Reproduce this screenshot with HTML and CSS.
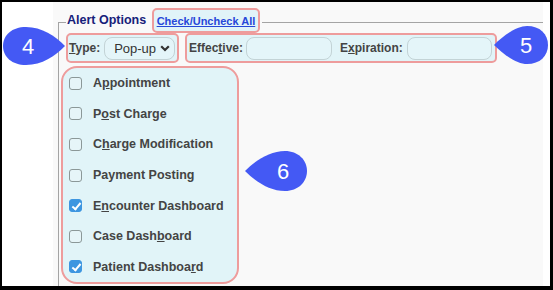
FILE: index.html
```html
<!DOCTYPE html>
<html lang="en">
<head>
  <meta charset="UTF-8">
  <title>Alert Options</title>
  <link rel="stylesheet" href="styles.css">
</head>
<body>

  <div class="frame">
    <div class="panel">
      <fieldset class="alert-options">
        <legend>
          <span class="legend-title">Alert Options</span>
          <span class="hl hl-link"><a href="#">Check/Uncheck All</a></span>
        </legend>

        <div class="row">
          <div class="hl hl-type">
            <label class="lbl"><u>T</u>ype:</label>
            <span class="select-wrap">
              <select class="sel">
                <option>Pop-up</option>
                <option>Banner</option>
              </select>
              <svg class="chev" width="10" height="7" viewBox="0 0 10 7"><path d="M1.2 1.2 L5 5 L8.8 1.2" fill="none" stroke="#333" stroke-width="2.2"/></svg>
            </span>
          </div>
          <div class="hl hl-dates">
            <label class="lbl">Effec<u>t</u>ive:</label>
            <input class="txt txt-eff" type="text">
            <label class="lbl lbl-exp">E<u>x</u>piration:</label>
            <input class="txt txt-exp" type="text">
          </div>
        </div>

        <div class="hl hl-list">
          <label class="check"><input type="checkbox">A<u>p</u>pointment</label>
          <label class="check"><input type="checkbox">P<u>o</u>st Charge</label>
          <label class="check"><input type="checkbox">C<u>h</u>arge Modification</label>
          <label class="check"><input type="checkbox">Payment Posting</label>
          <label class="check"><input type="checkbox" checked>E<u>n</u>counter Dashboard</label>
          <label class="check"><input type="checkbox">Case Dash<u>b</u>oard</label>
          <label class="check"><input type="checkbox" checked>Patient Dashboa<u>r</u>d</label>
        </div>
      </fieldset>
    </div>

    <!-- step callouts -->
    <svg class="callouts" width="553" height="290" viewBox="0 0 553 290">
      <path d="M65 46 C55 36 42 27 26 27 C12 27 3 35 3 46 C3 57 12 65 26 65 C42 65 55 56 65 46 Z" fill="#4459f4"/>
      <text x="28" y="54" class="num">4</text>
      <path d="M494 45 C504 35 517 26 527 26 C540 26 548 34 548 45 C548 56 540 64 527 64 C517 64 504 55 494 45 Z" fill="#4459f4"/>
      <text x="526" y="53" class="num">5</text>
      <path d="M245 171 C256 160 270 151 285 151 C298 151 307 160 307 171 C307 182 298 191 285 191 C270 191 256 182 245 171 Z" fill="#4459f4"/>
      <text x="283" y="179" class="num">6</text>
    </svg>
  </div>

</body>
</html>
```

FILE: styles.css
```css
* {
  box-sizing: border-box;
}

body {
  margin: 0;
  font-family: "Liberation Sans", Arial, sans-serif;
}

.frame {
  position: relative;
  width: 553px;
  height: 290px;
  background-color: #fff;
  border-style: solid;
  border-color: #000;
  border-width: 2px 3px 4px 2px;
}

.panel {
  margin-left: 51px;
  width: 490px;
  height: 100%;
  background-color: #f9f9f9;
  padding: 6px 0 0 5px;
}

.alert-options {
  margin: 0;
  height: 100%;
  padding: 0 0 0 7px;
  border: none;
  border-top: 1px solid #a4a4a4;
  border-left: 1px solid #a4a4a4;
}

.alert-options legend {
  padding: 0 2px 3px 1px;
  line-height: 17px;
}

.legend-title {
  font-size: 12.5px;
  font-weight: bold;
  color: #16207a;
  vertical-align: middle;
}

/* pink highlight boxes */
.hl {
  border: 2px solid #ee9c9c;
  background-color: #e1f4f8;
  border-radius: 5px;
}

.hl-link {
  display: inline-block;
  padding: 1px 3px;
  margin-left: 1px;
  vertical-align: middle;
}

.hl-link a {
  font-size: 11px;
  font-weight: bold;
  color: #2747d8;
}

.row {
  display: flex;
  gap: 6px;
  margin-top: -3px;
}

.lbl {
  font-size: 12px;
  font-weight: bold;
  color: #444;
}

.hl-type {
  display: flex;
  align-items: center;
  gap: 4px;
  width: 113px;
  height: 30px;
  padding: 0 2px 0 1px;
}

.select-wrap {
  position: relative;
  display: inline-block;
}

.sel {
  appearance: none;
  width: 71px;
  height: 23px;
  border: 1px solid #c3d3d6;
  border-radius: 8px;
  background-color: #e4f5f9;
  font-family: "Liberation Sans", Arial, sans-serif;
  font-size: 13px;
  color: #333;
  padding: 0 0 0 9px;
}

.chev {
  position: absolute;
  right: 5px;
  top: 8px;
  pointer-events: none;
}

.hl-dates {
  display: flex;
  align-items: center;
  width: 312px;
  height: 30px;
  padding: 0 2px 0 2px;
}

.txt {
  height: 23px;
  border: 1px solid #c3d3d6;
  border-radius: 8px;
  background-color: #e4f5f9;
  padding: 0 6px;
}

.txt-eff {
  width: 86px;
  margin-left: 3px;
}

.lbl-exp {
  margin-left: 8px;
}

.txt-exp {
  width: 85px;
  margin-left: 4px;
}

.hl-list {
  width: 178px;
  margin: 3px 0 0 -5px;
  padding: 0 0 0 6px;
  border-radius: 16px;
}

.check {
  display: flex;
  align-items: center;
  height: 30.6px;
  font-size: 12.5px;
  font-weight: bold;
  color: #444;
}

.check u {
  text-decoration-thickness: 1px;
}

.check input {
  appearance: none;
  width: 13px;
  height: 13px;
  margin: 0 11px 0 0;
  border: 1px solid #8b9898;
  border-radius: 3px;
  background-color: #e6f5f8;
}

.check input:checked {
  border-color: #3e96e0;
  background-color: #3e96e0;
  position: relative;
}

.check input:checked::after {
  content: "";
  position: absolute;
  left: 3.5px;
  top: 0.5px;
  width: 3px;
  height: 7px;
  border: solid #fff;
  border-width: 0 2px 2px 0;
  transform: rotate(40deg);
}

.callouts {
  position: absolute;
  left: -2px;
  top: -2px;
  pointer-events: none;
}

.num {
  font-family: "Liberation Sans", Arial, sans-serif;
  font-size: 22px;
  fill: #fff;
  text-anchor: middle;
}
```
